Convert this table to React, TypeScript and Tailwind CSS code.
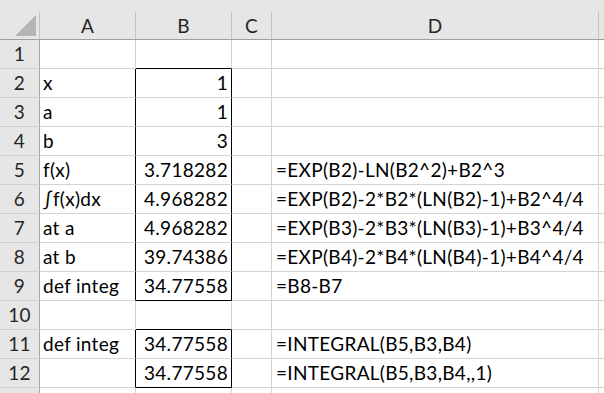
type Row = {
  a?: string
  b?: string
  d?: string
}

// rows 1..13 of the sheet
const rows: Row[] = [
  {},
  { a: "x", b: "1" },
  { a: "a", b: "1" },
  { a: "b", b: "3" },
  { a: "f(x)", b: "3.718282", d: "=EXP(B2)-LN(B2^2)+B2^3" },
  { a: "∫f(x)dx", b: "4.968282", d: "=EXP(B2)-2*B2*(LN(B2)-1)+B2^4/4" },
  { a: "at a", b: "4.968282", d: "=EXP(B3)-2*B3*(LN(B3)-1)+B3^4/4" },
  { a: "at b", b: "39.74386", d: "=EXP(B4)-2*B4*(LN(B4)-1)+B4^4/4" },
  { a: "def integ", b: "34.77558", d: "=B8-B7" },
  {},
  { a: "def integ", b: "34.77558", d: "=INTEGRAL(B5,B3,B4)" },
  { b: "34.77558", d: "=INTEGRAL(B5,B3,B4,,1)" },
  {},
]

// cells of column B that carry the black outline
const boxed = (n: number) => (n >= 2 && n <= 9) || n === 11 || n === 12
const boxBottom = (n: number) => n === 1 || n === 9 || n === 10 || n === 12

function HeaderRow() {
  return (
    <div className="flex h-[40px] w-[604px] items-end border-b border-[#9f9f9f] bg-[#e6e6e6] text-[#262626]">
      <div className="relative h-full w-[40px] shrink-0">
        <svg className="absolute left-[15px] top-[15px]" width="22" height="22" viewBox="0 0 22 22">
          <polygon points="21,0 21,21 0,21" fill="#b5b5b5" />
        </svg>
        <div className="absolute bottom-0 right-0 h-[27px] w-px bg-[#c3c3c3]" />
      </div>
      <div className="flex h-[27px] w-[96px] shrink-0 items-end justify-center border-r border-[#c3c3c3] pb-[2px]">A</div>
      <div className="flex h-[27px] w-[96px] shrink-0 items-end justify-center border-r border-[#c3c3c3] pb-[2px]">B</div>
      <div className="flex h-[27px] w-[40px] shrink-0 items-end justify-center border-r border-[#c3c3c3] pb-[2px]">C</div>
      <div className="flex h-[27px] w-[327px] shrink-0 items-end justify-center border-r border-[#c3c3c3] pb-[2px]">D</div>
    </div>
  )
}

function SheetRow({ n, row, last }: { n: number; row: Row; last: boolean }) {
  return (
    <div className="flex h-[29px] w-[604px]">
      <div className="flex w-[40px] shrink-0 items-end justify-center border-b border-r border-b-[#d0d0d0] border-r-[#a8a8a8] bg-[#e6e6e6] pb-[3px] text-[#262626]">
        {last ? null : n}
      </div>
      <div
        className={`flex w-[96px] shrink-0 items-end border-b border-r border-b-[#d4d4d4] pb-[3px] pl-[3px] ${
          boxed(n) ? "border-r-black" : "border-r-[#d4d4d4]"
        }`}
      >
        {row.a}
      </div>
      <div
        className={`flex w-[96px] shrink-0 items-end justify-end border-b border-r pb-[3px] pr-[3px] ${
          boxed(n) ? "border-r-black" : "border-r-[#d4d4d4]"
        } ${boxBottom(n) ? "border-b-black" : "border-b-[#d4d4d4]"}`}
      >
        {row.b}
      </div>
      <div className="w-[40px] shrink-0 border-b border-r border-[#d4d4d4]" />
      <div className="flex w-[327px] shrink-0 items-end whitespace-nowrap border-b border-r border-[#d4d4d4] pb-[3px] pl-[4px]">
        {row.d}
      </div>
      <div className="flex-1 border-b border-[#d4d4d4]" />
    </div>
  )
}

export default function App() {
  return (
    <div className="h-[393px] w-[604px] overflow-hidden bg-white font-['Lato',sans-serif] text-[19px] leading-[22px] tracking-[0.3px] text-black">
      <HeaderRow />
      {rows.map((row, i) => (
        <SheetRow key={i} n={i + 1} row={row} last={i === rows.length - 1} />
      ))}
    </div>
  )
}
